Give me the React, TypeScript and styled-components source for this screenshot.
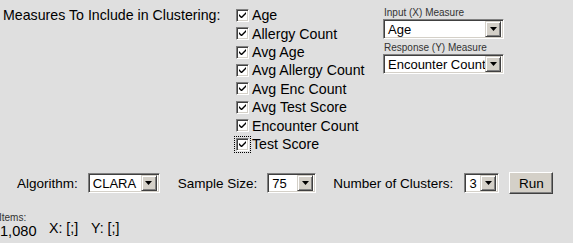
import React, { FC } from "react";
import styled, { createGlobalStyle } from "styled-components";

const GlobalStyle = createGlobalStyle`
  body {
    margin: 0;
    background: #dfdfdf;
    font-family: "Liberation Sans", Arial, sans-serif;
    font-size: 14.2px;
    color: #000;
  }
`;

const MEASURES = [
  "Age",
  "Allergy Count",
  "Avg Age",
  "Avg Allergy Count",
  "Avg Enc Count",
  "Avg Test Score",
  "Encounter Count",
  "Test Score",
];

const Page = styled.div`
  width: 573px;
  height: 243px;
  display: flex;
  flex-direction: column;
`;

const Top = styled.div`
  display: flex;
  padding: 6px 0 0 3px;
`;

const Title = styled.div`
  width: 233px;
  line-height: 19px;
`;

const MeasureList = styled.div`
  width: 147px;
  display: flex;
  flex-direction: column;
`;

const MeasureRow = styled.label`
  height: 18.43px;
  display: flex;
  align-items: center;
  gap: 3px;
`;

const Box = styled.span<{ $focused?: boolean }>`
  width: 13px;
  height: 13px;
  flex: none;
  box-sizing: border-box;
  background: #fff;
  border-style: solid;
  border-width: 1px;
  border-color: #808080 #fff #fff #808080;
  box-shadow: inset 1px 1px 0 #404040, inset -1px -1px 0 #d4d0c8;
  display: flex;
  align-items: center;
  justify-content: center;
  outline: ${p => (p.$focused ? "1px dotted #000" : "none")};
  outline-offset: 1px;
`;

const Axes = styled.div`
  display: flex;
  flex-direction: column;
  padding-top: 1px;
`;

const SmallLabel = styled.div`
  font-size: 10px;
  color: #333;
  height: 12px;
  line-height: 12px;
  padding-left: 1px;
`;

const Select = styled.div<{ $width: number }>`
  width: ${p => p.$width}px;
  height: 20px;
  flex: none;
  box-sizing: border-box;
  background: #fff;
  border-style: solid;
  border-width: 1px;
  border-color: #808080 #fff #fff #808080;
  box-shadow: inset 1px 1px 0 #404040, inset -1px -1px 0 #d4d0c8;
  display: flex;
  align-items: center;
  padding: 2px;
  margin-bottom: 3px;
`;

const SelectText = styled.span`
  flex: 1;
  min-width: 0;
  padding-left: 2px;
  font-size: 13px;
  white-space: nowrap;
`;

const Arrow = styled.span`
  width: 16px;
  height: 16px;
  flex: none;
  box-sizing: border-box;
  background: #d4d0c8;
  border-style: solid;
  border-width: 1px;
  border-color: #d4d0c8 #404040 #404040 #d4d0c8;
  box-shadow: inset 1px 1px 0 #fff, inset -1px -1px 0 #808080;
  display: flex;
  align-items: center;
  justify-content: center;
`;

const Controls = styled.div`
  display: flex;
  align-items: center;
  padding: 19px 0 0 17px;
  height: 22px;
  font-size: 13.5px;
  > ${Select} {
    margin-bottom: 0;
  }
`;

const ControlLabel = styled.span<{ $gap: number }>`
  margin-right: ${p => p.$gap}px;
  white-space: nowrap;
`;

const Spacer = styled.span<{ $w: number }>`
  width: ${p => p.$w}px;
  flex: none;
`;

const RunButton = styled.button`
  width: 44px;
  height: 22px;
  font: inherit;
  background: #d4d0c8;
  border-style: solid;
  border-width: 1px;
  border-color: #fff #404040 #404040 #fff;
  box-shadow: inset -1px -1px 0 #808080;
  padding: 0;
  color: #000;
`;

const Stats = styled.div`
  display: flex;
  align-items: flex-end;
  padding-top: 18px;
`;

const StatBlock = styled.div`
  display: flex;
  flex-direction: column;
  width: 49px;
`;

const StatLabel = styled.div`
  font-size: 10px;
  color: #333;
  line-height: 11px;
  margin-left: -1px;
`;

const StatValue = styled.div`
  font-size: 14.6px;
  line-height: 17px;
`;

const Coord = styled.span`
  width: 42px;
  line-height: 17px;
  padding-bottom: 3px;
`;

const Check: FC<{ focused?: boolean }> = ({ focused }) => (
  <Box $focused={focused}>
    <svg width="7" height="7" viewBox="0 0 7 7">
      <path d="M0 2 L0 4 L2 6 L3 6 L7 2 L7 0 L2.5 4.5 Z" fill="#000" />
    </svg>
  </Box>
);

const Dropdown: FC<{ value: string; width: number }> = ({ value, width }) => (
  <Select $width={width}>
    <SelectText>{value}</SelectText>
    <Arrow>
      <svg width="7" height="4" viewBox="0 0 7 4">
        <path d="M0 0 H7 L3.5 4 Z" fill="#000" />
      </svg>
    </Arrow>
  </Select>
);

export default function App() {
  return (
    <Page>
      <GlobalStyle />
      <Top>
        <Title>Measures To Include in Clustering:</Title>
        <MeasureList>
          {MEASURES.map((m, i) => (
            <MeasureRow key={m}>
              <Check focused={i === MEASURES.length - 1} />
              {m}
            </MeasureRow>
          ))}
        </MeasureList>
        <Axes>
          <SmallLabel>Input (X) Measure</SmallLabel>
          <Dropdown value="Age" width={121} />
          <SmallLabel>Response (Y) Measure</SmallLabel>
          <Dropdown value="Encounter Count" width={121} />
        </Axes>
      </Top>
      <Controls>
        <ControlLabel $gap={10}>Algorithm:</ControlLabel>
        <Dropdown value="CLARA" width={72} />
        <Spacer $w={18} />
        <ControlLabel $gap={10}>Sample Size:</ControlLabel>
        <Dropdown value="75" width={49} />
        <Spacer $w={17} />
        <ControlLabel $gap={11}>Number of Clusters:</ControlLabel>
        <Dropdown value="3" width={35} />
        <Spacer $w={10} />
        <RunButton>Run</RunButton>
      </Controls>
      <Stats>
        <StatBlock>
          <StatLabel>Items:</StatLabel>
          <StatValue>1,080</StatValue>
        </StatBlock>
        <Coord>X: [;]</Coord>
        <Coord>Y: [;]</Coord>
      </Stats>
    </Page>
  );
}
